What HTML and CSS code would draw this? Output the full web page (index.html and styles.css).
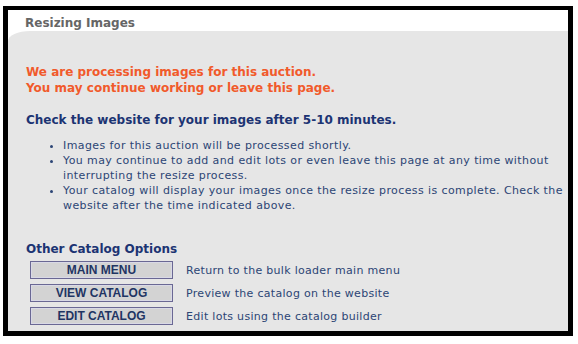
FILE: index.html
```html
<!DOCTYPE html>
<html>
<head>
<meta charset="utf-8">
<link rel="stylesheet" href="styles.css">
</head>
<body>
<div class="frame">
  <div class="header">Resizing Images</div>
  <div class="panel">
    <p class="alert">We are processing images for this auction.<br>You may continue working or leave this page.</p>
    <h2 class="check">Check the website for your images after 5-10 minutes.</h2>
    <ul class="notes">
      <li>Images for this auction will be processed shortly.</li>
      <li>You may continue to add and edit lots or even leave this page at any time without interrupting the resize process.</li>
      <li>Your catalog will display your images once the resize process is complete. Check the website after the time indicated above.</li>
    </ul>
    <h3 class="options-title">Other Catalog Options</h3>
    <div class="options">
      <div class="option"><span class="btn">MAIN MENU</span><span class="desc">Return to the bulk loader main menu</span></div>
      <div class="option"><span class="btn">VIEW CATALOG</span><span class="desc">Preview the catalog on the website</span></div>
      <div class="option"><span class="btn">EDIT CATALOG</span><span class="desc">Edit lots using the catalog builder</span></div>
    </div>
  </div>
</div>
</body>
</html>
```
FILE: styles.css
```css
html, body {
  margin: 0;
  padding: 0;
  background: #ffffff;
}
body {
  font-family: "DejaVu Sans", Verdana, sans-serif;
}
.frame {
  margin: 6px 0 0 3px;
  width: 570px;
  height: 330px;
  box-sizing: border-box;
  border: 5px solid #000;
  border-top-width: 4px;
  display: flex;
  flex-direction: column;
  background: #fff;
}
.header {
  height: 21px;
  padding-left: 17px;
  font-size: 12px;
  font-weight: bold;
  color: #666666;
  line-height: 26px;
}
.panel {
  flex: 1;
  background: #e6e6e6;
  border-top-left-radius: 22px 10px;
  padding: 0 0 0 18px;
  display: flex;
  flex-direction: column;
}
.alert {
  margin: 33px 0 0 0;
  font-size: 12px;
  font-weight: bold;
  line-height: 16px;
  color: #f15a2b;
}
.check {
  margin: 16px 0 0 0;
  font-size: 12px;
  font-weight: bold;
  line-height: 16px;
  color: #1c3473;
}
.notes {
  margin: 10px 0 0 0;
  padding: 0 0 0 37px;
  font-size: 11px;
  letter-spacing: 0.4px;
  line-height: 15px;
  color: #2c4575;
}
.options-title {
  margin: 28px 0 0 0;
  font-size: 12px;
  font-weight: bold;
  line-height: 16px;
  color: #1c3473;
}
.options {
  display: flex;
  flex-direction: column;
  gap: 5px;
  margin-top: 4px;
}
.option {
  display: flex;
  align-items: center;
}
.btn {
  box-sizing: border-box;
  width: 143px;
  height: 18px;
  margin-left: 4px;
  border: 1px solid #6a6894;
  background: #d3d3d3;
  box-shadow: inset 0 0 0 1px #d9d9e6;
  font-family: "Liberation Sans", Arial, sans-serif;
  font-size: 12px;
  font-weight: bold;
  color: #1f3563;
  text-align: center;
  line-height: 16px;
}
.desc {
  margin-left: 13px;
  font-size: 11px;
  letter-spacing: 0.3px;
  color: #2c4575;
}
```
